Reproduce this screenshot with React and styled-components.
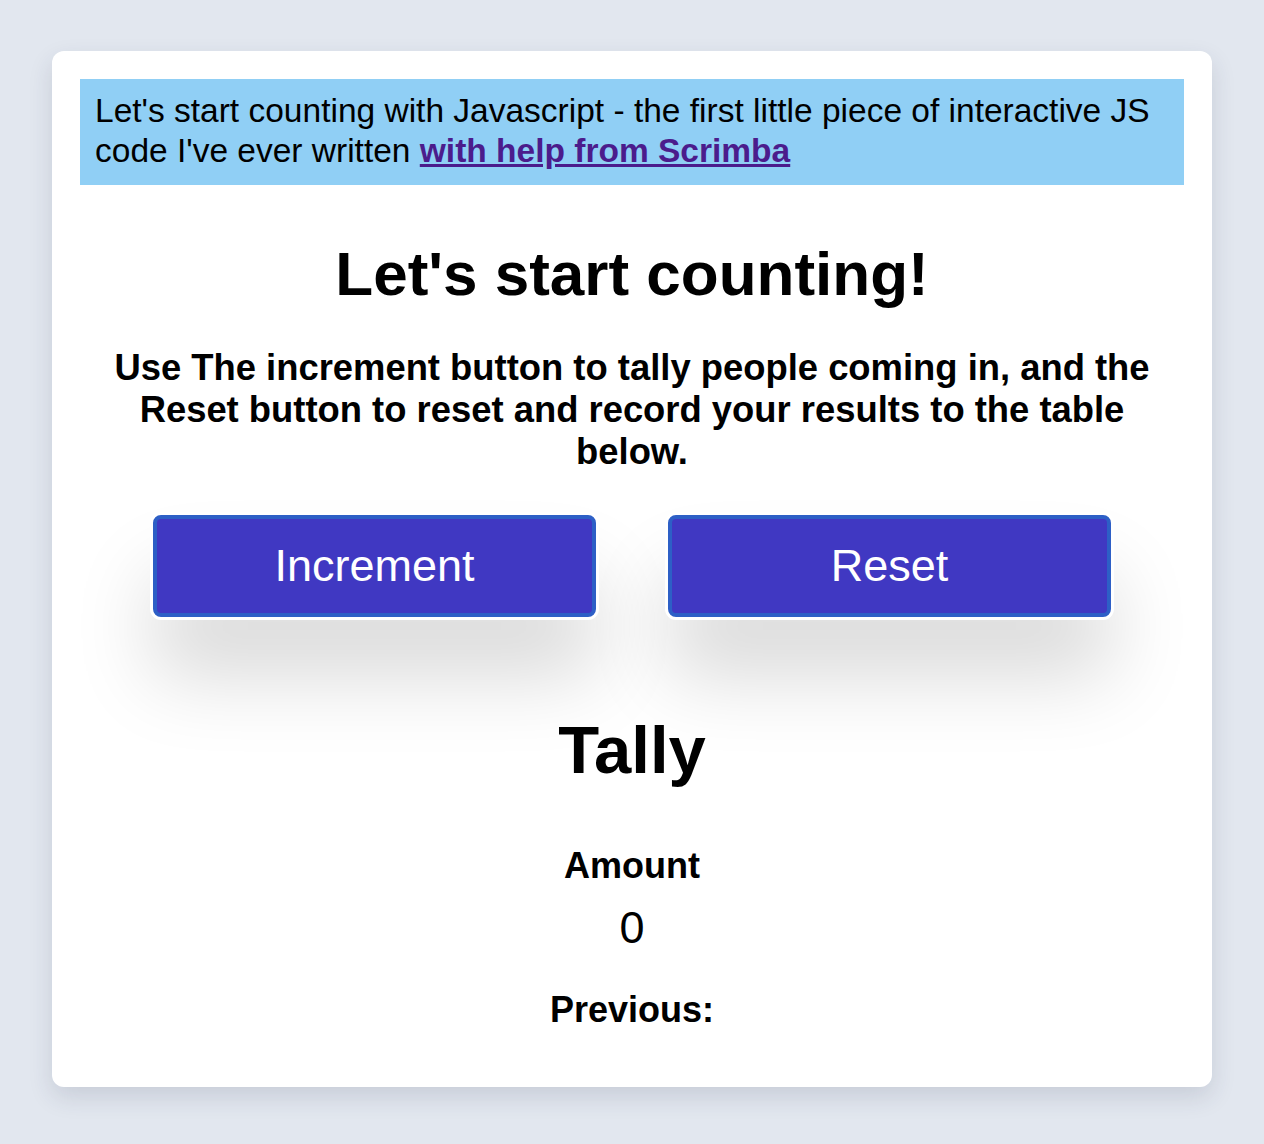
import React, { useState } from 'react';
import styled, { createGlobalStyle } from 'styled-components';

const GlobalStyle = createGlobalStyle`
  html, body {
    margin: 0;
    padding: 0;
    background: #e2e7ef;
    font-family: 'Liberation Sans', Arial, Helvetica, sans-serif;
  }
`;

//styling
const Page = styled.div`
  padding: 51px 52px 57px;
`;
const Card = styled.main`
  background: #ffffff;
  border-radius: 12px;
  padding: 28px 28px 57px;
  box-shadow: 0 10px 24px rgba(40, 50, 80, 0.14);
`;
const Banner = styled.p`
  margin: 0;
  background: #90cff5;
  padding: 12px 15px 14px;
  font-size: 33.5px;
  line-height: 40px;
  color: #000;
`;
const BannerLink = styled.a`
  color: #4b1c8c;
  font-weight: 700;
  text-decoration: underline;
`;
const Title = styled.h1`
  margin: 54px 0 0;
  text-align: center;
  font-size: 62px;
  line-height: 70px;
  font-weight: 700;
`;
const Intro = styled.p`
  margin: 38px 20px 0;
  text-align: center;
  font-size: 36.4px;
  line-height: 42px;
  font-weight: 700;
`;
const ButtonRow = styled.div`
  display: flex;
  justify-content: center;
  gap: 72px;
  margin-top: 42px;
`;
const Button = styled.button`
  width: 443px;
  height: 102px;
  background: #4038c2;
  color: #ffffff;
  font-family: 'Liberation Sans', Arial, sans-serif;
  font-size: 45px;
  border: 4px solid #2d5fc6;
  border-radius: 8px;
  cursor: pointer;
  box-shadow: 0 0 0 3px #ffffff, 0 60px 80px rgba(0, 0, 0, 0.15);
`;
const Tally = styled.h2`
  margin: 93px 0 0;
  text-align: center;
  font-size: 67px;
  line-height: 80px;
  font-weight: 700;
`;
const Label = styled.h3`
  margin: ${props => props.top}px 0 0;
  text-align: center;
  font-size: 36px;
  line-height: 40px;
  font-weight: 700;
`;
const Count = styled.p`
  margin: 19px 0 0;
  text-align: center;
  font-size: 45px;
  line-height: 46px;
`;

//implementation
export default function App() {
  const [count, setCount] = useState(0);
  const [previous, setPrevious] = useState([]);

  return (
    <Page>
      <GlobalStyle />
      <Card>
        <Banner>
          Let's start counting with Javascript - the first little piece of interactive JS code I've ever
          written <BannerLink href="#">with help from Scrimba</BannerLink>
        </Banner>
        <Title>Let's start counting!</Title>
        <Intro>
          Use The increment button to tally people coming in, and the Reset button to reset and record your
          results to the table below.
        </Intro>
        <ButtonRow>
          <Button onClick={() => setCount(count + 1)}>Increment</Button>
          <Button
            onClick={() => {
              setPrevious([...previous, count]);
              setCount(0);
            }}
          >
            Reset
          </Button>
        </ButtonRow>
        <Tally>Tally</Tally>
        <Label top={56}>Amount</Label>
        <Count>{count}</Count>
        <Label top={39}>Previous: {previous.join(' - ')}</Label>
      </Card>
    </Page>
  );
}
